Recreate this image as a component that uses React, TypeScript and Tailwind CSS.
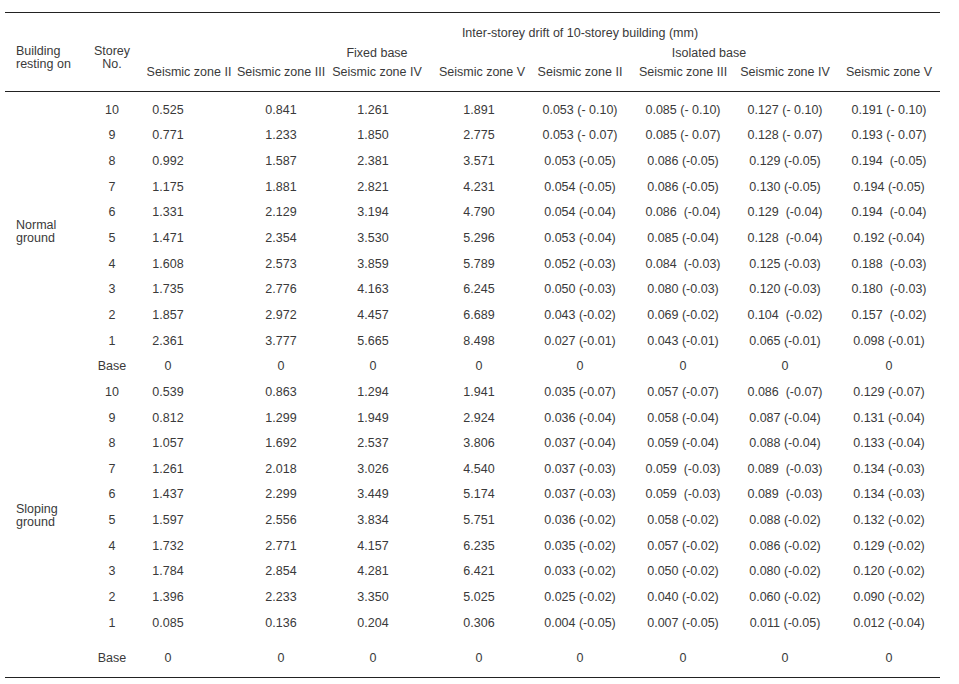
const cols = "grid grid-cols-[87px_40px_114px_70px_122px_88px_108px_98px_106px_102px]";

type Row = [string, string[]];

const normal: Row[] = [
  ["10", ["0.525", "0.841", "1.261", "1.891", "0.053 (- 0.10)", "0.085 (- 0.10)", "0.127 (- 0.10)", "0.191 (- 0.10)"]],
  ["9", ["0.771", "1.233", "1.850", "2.775", "0.053 (- 0.07)", "0.085 (- 0.07)", "0.128 (- 0.07)", "0.193 (- 0.07)"]],
  ["8", ["0.992", "1.587", "2.381", "3.571", "0.053 (-0.05)", "0.086 (-0.05)", "0.129 (-0.05)", "0.194  (-0.05)"]],
  ["7", ["1.175", "1.881", "2.821", "4.231", "0.054 (-0.05)", "0.086 (-0.05)", "0.130 (-0.05)", "0.194 (-0.05)"]],
  ["6", ["1.331", "2.129", "3.194", "4.790", "0.054 (-0.04)", "0.086  (-0.04)", "0.129  (-0.04)", "0.194  (-0.04)"]],
  ["5", ["1.471", "2.354", "3.530", "5.296", "0.053 (-0.04)", "0.085 (-0.04)", "0.128  (-0.04)", "0.192 (-0.04)"]],
  ["4", ["1.608", "2.573", "3.859", "5.789", "0.052 (-0.03)", "0.084  (-0.03)", "0.125 (-0.03)", "0.188  (-0.03)"]],
  ["3", ["1.735", "2.776", "4.163", "6.245", "0.050 (-0.03)", "0.080 (-0.03)", "0.120 (-0.03)", "0.180  (-0.03)"]],
  ["2", ["1.857", "2.972", "4.457", "6.689", "0.043 (-0.02)", "0.069 (-0.02)", "0.104  (-0.02)", "0.157  (-0.02)"]],
  ["1", ["2.361", "3.777", "5.665", "8.498", "0.027 (-0.01)", "0.043 (-0.01)", "0.065 (-0.01)", "0.098 (-0.01)"]],
  ["Base", ["0", "0", "0", "0", "0", "0", "0", "0"]],
];

const sloping: Row[] = [
  ["10", ["0.539", "0.863", "1.294", "1.941", "0.035 (-0.07)", "0.057 (-0.07)", "0.086  (-0.07)", "0.129 (-0.07)"]],
  ["9", ["0.812", "1.299", "1.949", "2.924", "0.036 (-0.04)", "0.058 (-0.04)", "0.087 (-0.04)", "0.131 (-0.04)"]],
  ["8", ["1.057", "1.692", "2.537", "3.806", "0.037 (-0.04)", "0.059 (-0.04)", "0.088 (-0.04)", "0.133 (-0.04)"]],
  ["7", ["1.261", "2.018", "3.026", "4.540", "0.037 (-0.03)", "0.059  (-0.03)", "0.089  (-0.03)", "0.134 (-0.03)"]],
  ["6", ["1.437", "2.299", "3.449", "5.174", "0.037 (-0.03)", "0.059  (-0.03)", "0.089  (-0.03)", "0.134 (-0.03)"]],
  ["5", ["1.597", "2.556", "3.834", "5.751", "0.036 (-0.02)", "0.058 (-0.02)", "0.088 (-0.02)", "0.132 (-0.02)"]],
  ["4", ["1.732", "2.771", "4.157", "6.235", "0.035 (-0.02)", "0.057 (-0.02)", "0.086 (-0.02)", "0.129 (-0.02)"]],
  ["3", ["1.784", "2.854", "4.281", "6.421", "0.033 (-0.02)", "0.050 (-0.02)", "0.080 (-0.02)", "0.120 (-0.02)"]],
  ["2", ["1.396", "2.233", "3.350", "5.025", "0.025 (-0.02)", "0.040 (-0.02)", "0.060 (-0.02)", "0.090 (-0.02)"]],
  ["1", ["0.085", "0.136", "0.204", "0.306", "0.004 (-0.05)", "0.007 (-0.05)", "0.011 (-0.05)", "0.012 (-0.04)"]],
  ["Base", ["0", "0", "0", "0", "0", "0", "0", "0"]],
];

// small nudges so the values sit where the scan has them
const valuePad = ["pr-[42px]", "", "pr-[8px]", "pr-[6px]", "", "", "", ""];

const zones = ["Seismic zone II", "Seismic zone III", "Seismic zone IV", "Seismic zone V"];

function Cells({ row, last }: { row: Row; last: boolean }) {
  const [storey, values] = row;
  const cell = "flex justify-center whitespace-pre " + (last ? "items-center pt-[4px]" : "items-center");
  return (
    <>
      <div className={cell}>{storey}</div>
      {values.map((v, i) => (
        <div key={i} className={cell + " " + valuePad[i]}>
          {v}
        </div>
      ))}
    </>
  );
}

export default function App() {
  return (
    <div className="w-[959px] h-[684px] bg-white text-[#3a3a3a] text-[12.5px] leading-[14px] font-['Liberation_Sans',Arial,sans-serif] pt-[12px] pl-[5px]">
      <div className="w-[935px] border-t border-[#222]">
        {/* header */}
        <div className={cols + " grid-rows-[20px_20px_18px] pt-[10px] pb-[10px] border-b border-[#222]"}>
          <div className="col-start-3 col-span-8 flex justify-center pl-[88px] items-center whitespace-nowrap">
            Inter-storey drift of 10-storey building (mm)
          </div>
          <div className="col-start-1 row-start-2 row-span-2 pl-[11px] pt-[2px] leading-[13px] whitespace-nowrap">
            Building
            <br />
            resting on
          </div>
          <div className="col-start-2 row-start-2 row-span-2 pt-[2px] leading-[13px] text-center whitespace-nowrap">
            Storey
            <br />
            No.
          </div>
          <div className="col-start-5 row-start-2 flex justify-center items-center whitespace-nowrap">Fixed base</div>
          <div className="col-start-7 col-span-4 row-start-2 flex justify-center items-center pr-[48px] whitespace-nowrap">
            Isolated base
          </div>
          {[...zones, ...zones].map((z, i) => (
            <div key={i} className="row-start-3 flex justify-center items-center whitespace-nowrap">
              {z}
            </div>
          ))}
        </div>

        {/* body */}
        <div className={cols + " grid-rows-[repeat(21,25.65px)_42px] pt-[5px] border-b border-[#222]"}>
          <div className="row-span-11 flex items-center pl-[11px] pb-[12px] leading-[13px]">
            Normal
            <br />
            ground
          </div>
          {normal.map((r, i) => (
            <Cells key={"n" + i} row={r} last={false} />
          ))}
          <div className="row-span-11 flex items-center pl-[11px] pb-[25px] leading-[13px]">
            Sloping
            <br />
            ground
          </div>
          {sloping.map((r, i) => (
            <Cells key={"s" + i} row={r} last={i === sloping.length - 1} />
          ))}
        </div>
      </div>
    </div>
  );
}
